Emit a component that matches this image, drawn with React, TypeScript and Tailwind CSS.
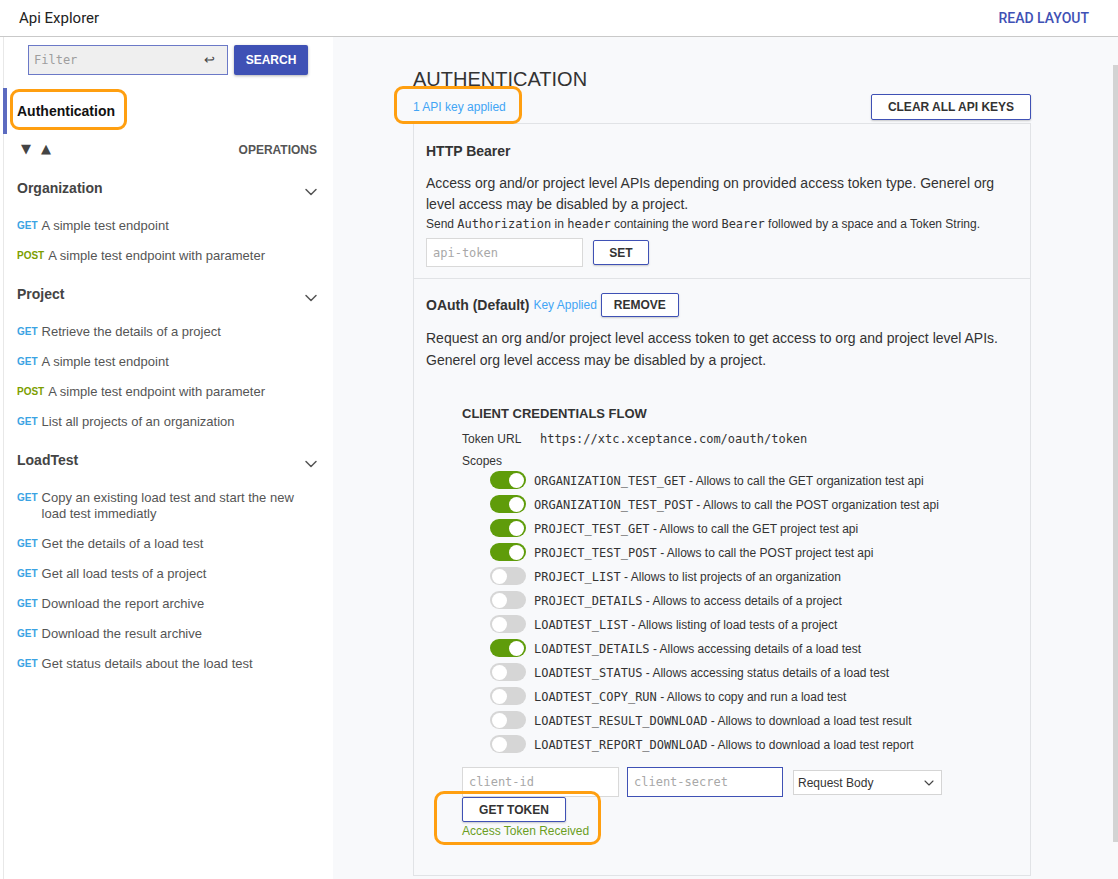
import React from 'react';
import { ChevronDown } from 'lucide-react';

type Op = { m: 'GET' | 'POST'; t: string };

const groups: { name: string; ops: Op[] }[] = [
  {
    name: 'Organization',
    ops: [
      { m: 'GET', t: 'A simple test endpoint' },
      { m: 'POST', t: 'A simple test endpoint with parameter' },
    ],
  },
  {
    name: 'Project',
    ops: [
      { m: 'GET', t: 'Retrieve the details of a project' },
      { m: 'GET', t: 'A simple test endpoint' },
      { m: 'POST', t: 'A simple test endpoint with parameter' },
      { m: 'GET', t: 'List all projects of an organization' },
    ],
  },
  {
    name: 'LoadTest',
    ops: [
      { m: 'GET', t: 'Copy an existing load test and start the new load test immediatly' },
      { m: 'GET', t: 'Get the details of a load test' },
      { m: 'GET', t: 'Get all load tests of a project' },
      { m: 'GET', t: 'Download the report archive' },
      { m: 'GET', t: 'Download the result archive' },
      { m: 'GET', t: 'Get status details about the load test' },
    ],
  },
];

const scopes: [string, string, boolean][] = [
  ['ORGANIZATION_TEST_GET', 'Allows to call the GET organization test api', true],
  ['ORGANIZATION_TEST_POST', 'Allows to call the POST organization test api', true],
  ['PROJECT_TEST_GET', 'Allows to call the GET project test api', true],
  ['PROJECT_TEST_POST', 'Allows to call the POST project test api', true],
  ['PROJECT_LIST', 'Allows to list projects of an organization', false],
  ['PROJECT_DETAILS', 'Allows to access details of a project', false],
  ['LOADTEST_LIST', 'Allows listing of load tests of a project', false],
  ['LOADTEST_DETAILS', 'Allows accessing details of a load test', true],
  ['LOADTEST_STATUS', 'Allows accessing status details of a load test', false],
  ['LOADTEST_COPY_RUN', 'Allows to copy and run a load test', false],
  ['LOADTEST_RESULT_DOWNLOAD', 'Allows to download a load test result', false],
  ['LOADTEST_REPORT_DOWNLOAD', 'Allows to download a load test report', false],
];

const mono = "font-['DejaVu_Sans_Mono',monospace]";
const outlineBtn =
  'flex items-center justify-center bg-white border border-[#3f51b5] rounded-[2px] text-[12px] font-bold text-[#333] shadow-[0_1px_2px_rgba(0,0,0,0.2)]';

const Toggle: React.FC<{ on: boolean }> = ({ on }) => (
  <div
    className={`w-[36px] h-[18px] rounded-full flex items-center px-[2px] shrink-0 ${
      on ? 'bg-[#5f9c0a] justify-end' : 'bg-[#d6d6d6] justify-start'
    }`}
  >
    <div className="w-[15px] h-[15px] rounded-full bg-white" />
  </div>
);

export default function App() {
  return (
    <div className="w-[1118px] h-[879px] overflow-hidden bg-white flex flex-col font-['Liberation_Sans',Arial,sans-serif] text-[#333]">
      {/* Top bar */}
      <header className="h-[37px] shrink-0 border-b border-[#c9c9c9] flex items-center justify-between pl-[19px] pr-[29px] font-['Roboto',sans-serif]">
        <span className="text-[15px] text-[#222]">Api Explorer</span>
        <span className="text-[14px] font-medium text-[#3f51b5]">READ LAYOUT</span>
      </header>

      <div className="flex flex-1 min-h-0">
        {/* Sidebar */}
        <aside className="w-[330px] ml-[3px] shrink-0 border-l border-[#e8e8e8] bg-white">
          <div className="flex gap-[6px] pl-[24px] pt-[8px] pb-[13px]">
            <div className="w-[200px] h-[30px] flex items-center bg-[#efefef] border border-[#6b79c7] pl-[5px] pr-[12px]">
              <input
                placeholder="Filter"
                className={`flex-1 min-w-0 bg-transparent outline-none text-[12px] ${mono} placeholder:text-[#9e9e9e]`}
              />
              <span className="text-[13px] text-[#444]">↩</span>
            </div>
            <button className="w-[74px] h-[30px] bg-[#3f51b5] text-white text-[12px] font-bold rounded-[2px] shadow-[0_1px_3px_rgba(0,0,0,0.3)]">
              SEARCH
            </button>
          </div>

          <div className="relative h-[46px] flex items-center">
            <div className="self-stretch w-[4px] -ml-[1px] bg-[#5c6bc0]" />
            <span className="pl-[10px] text-[14px] font-bold text-[#111]">Authentication</span>
            <div className="absolute left-[6px] top-[1px] w-[117px] h-[41px] border-[3px] border-[#ff9f10] rounded-[9px] pointer-events-none" />
          </div>

          <div className="h-[30px] flex items-center justify-between pl-[17px] pr-[16px]">
            <span className="text-[13px] leading-[16px] text-[#444] flex gap-[10px] font-['DejaVu_Sans',sans-serif]">
              <span>▼</span>
              <span>▲</span>
            </span>
            <span className="text-[12px] font-bold text-[#555] mt-[1px]">OPERATIONS</span>
          </div>

          {groups.map((g) => (
            <div key={g.name} className="mt-[2px]">
              <div className="h-[44px] flex items-center justify-between pl-[13px] pr-[12px]">
                <span className="text-[14px] font-bold text-[#444]">{g.name}</span>
                <ChevronDown size={20} strokeWidth={1.8} className="text-[#555] mt-[8px]" />
              </div>
              {g.ops.map((o, i) => (
                <div key={i} className="flex items-start gap-[4px] pt-[8px] pb-[6px] pl-[13px] pr-[22px] leading-[16px]">
                  <span
                    className={`shrink-0 text-[10px] font-bold ${
                      o.m === 'GET' ? 'text-[#3aa3e3]' : 'text-[#7c9e00]'
                    }`}
                  >
                    {o.m}
                  </span>
                  <span className="text-[13px] text-[#555]">{o.t}</span>
                </div>
              ))}
            </div>
          ))}
        </aside>

        {/* Main */}
        <main className="flex-1 flex bg-[#f8f9fb] min-w-0">
          <div className="flex-1 pl-[80px] pt-[30px]">
            <h1 className="text-[20px] leading-[24px] text-[#333]">AUTHENTICATION</h1>
            <div className="relative w-[618px] h-[32px] flex items-center justify-between">
              <span className="text-[12px] text-[#42a5f5]">1 API key applied</span>
              <div className="absolute -left-[19px] -top-[5px] w-[128px] h-[38px] border-[3px] border-[#ff9f10] rounded-[9px] pointer-events-none" />
              <button className={`${outlineBtn} w-[160px] h-[26px]`}>CLEAR ALL API KEYS</button>
            </div>

            <div className="w-[618px] border border-[#e1e3e6] flex flex-col">
              {/* HTTP Bearer */}
              <section className="px-[12px] pt-[17px] pb-[11px] border-b border-[#e1e3e6]">
                <div className="text-[14px] leading-[20px] font-bold">HTTP Bearer</div>
                <p className="mt-[12px] text-[14px] leading-[21px]">
                  Access org and/or project level APIs depending on provided access token type. Generel org level
                  access may be disabled by a project.
                </p>
                <p className="text-[12px] leading-[18px]">
                  Send <span className={mono}>Authorization</span> in <span className={mono}>header</span> containing
                  the word <span className={mono}>Bearer</span> followed by a space and a Token String.
                </p>
                <div className="mt-[5px] flex items-center gap-[10px]">
                  <input
                    placeholder="api-token"
                    className={`w-[157px] h-[29px] border border-[#d9d9d9] bg-white px-[6px] outline-none text-[12px] ${mono} placeholder:text-[#a8a8a8]`}
                  />
                  <button className={`${outlineBtn} w-[56px] h-[25px]`}>SET</button>
                </div>
              </section>

              {/* OAuth */}
              <section className="px-[12px] pt-[14px] pb-[35px]">
                <div className="h-[24px] flex items-center gap-[4px]">
                  <span className="text-[14px] font-bold">OAuth (Default)</span>
                  <span className="text-[12px] text-[#42a5f5]">Key Applied</span>
                  <button className={`${outlineBtn} w-[78px] h-[24px]`}>REMOVE</button>
                </div>
                <p className="mt-[10px] text-[14px] leading-[22px]">
                  Request an org and/or project level access token to get access to org and project level APIs.
                  Generel org level access may be disabled by a project.
                </p>

                <div className="pl-[36px] mt-[34px]">
                  <div className="text-[13px] leading-[18px] font-bold">CLIENT CREDENTIALS FLOW</div>
                  <div className="mt-[5px] flex text-[12px] leading-[22px]">
                    <span className="w-[78px]">Token URL</span>
                    <span className={mono}>https://xtc.xceptance.com/oauth/token</span>
                  </div>
                  <div className="h-[18px] text-[12px] leading-[22px]">Scopes</div>
                  <div className="pl-[28px]">
                    {scopes.map(([name, desc, on]) => (
                      <div key={name} className="h-[24px] flex items-center gap-[8px] text-[12px]">
                        <Toggle on={on} />
                        <span className="mt-[1px]">
                          <span className={mono}>{name}</span> - {desc}
                        </span>
                      </div>
                    ))}
                  </div>

                  <div className="mt-[11px] flex items-start">
                    <input
                      placeholder="client-id"
                      className={`w-[157px] h-[30px] border border-[#d9d9d9] bg-white px-[6px] outline-none text-[12px] ${mono} placeholder:text-[#a8a8a8]`}
                    />
                    <input
                      placeholder="client-secret"
                      className={`ml-[8px] w-[156px] h-[30px] border border-[#3f51b5] bg-white px-[6px] outline-none text-[12px] ${mono} placeholder:text-[#a8a8a8]`}
                    />
                    <div className="ml-[10px] mt-[3px] w-[149px] h-[25px] border border-[#d5d5d5] bg-white flex items-center justify-between pl-[4px] pr-[4px] text-[12px]">
                      <span>Request Body</span>
                      <ChevronDown size={16} strokeWidth={1.6} className="text-[#444]" />
                    </div>
                  </div>

                  <div className="relative w-[160px]">
                    <button className={`${outlineBtn} w-[104px] h-[25px]`}>GET TOKEN</button>
                    <div className="text-[12px] leading-[18px] text-[#6b9e1f]">Access Token Received</div>
                    <div className="absolute -left-[28px] -top-[6px] w-[167px] h-[54px] border-[3px] border-[#ff9f10] rounded-[10px] pointer-events-none" />
                  </div>
                </div>
              </section>
            </div>
          </div>

          {/* scrollbar */}
          <div className="w-[5px] shrink-0">
            <div className="mt-[28px] h-[777px] bg-[#d3d3d3]" />
          </div>
        </main>
      </div>
    </div>
  );
}
